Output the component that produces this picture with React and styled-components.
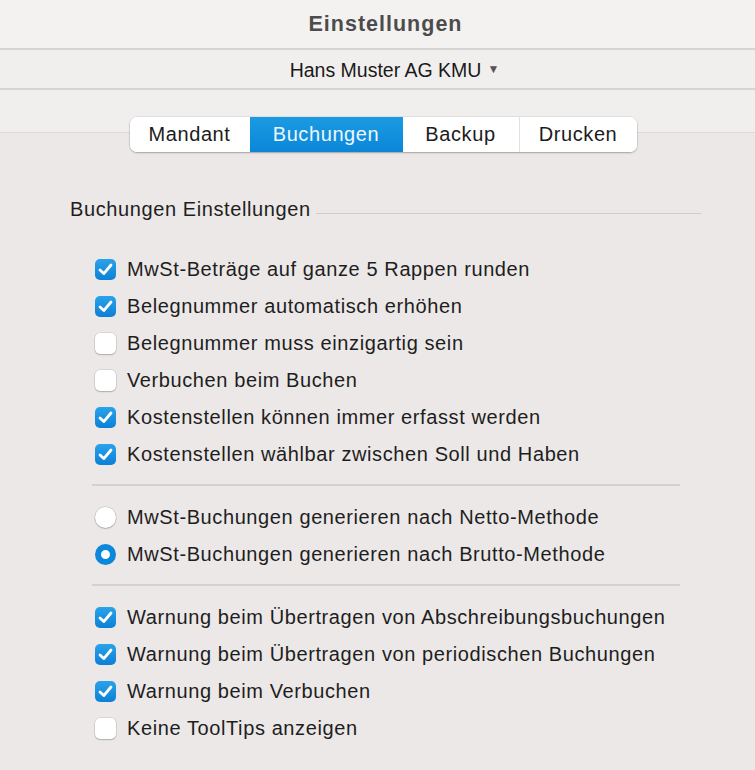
import React from 'react'
import styled, { createGlobalStyle } from 'styled-components'

const GlobalStyle = createGlobalStyle`
  html, body {
    margin: 0;
    padding: 0;
    background: #ebe8e7;
  }
  body {
    font-family: "Liberation Sans", Arial, Helvetica, sans-serif;
    color: #1e1e1e;
  }
`

const Window = styled.div`
  width: 755px;
  height: 770px;
  overflow: hidden;
  background: #ebe8e7;
`

const TitleBar = styled.div`
  height: 48px;
  display: flex;
  align-items: center;
  justify-content: center;
  padding-left: 16px;
  background: #f4f2f1;
  border-bottom: 2px solid #d6d4d3;
  font-size: 21.5px;
  font-weight: bold;
  letter-spacing: 1px;
  color: #4c4c4c;
`

const CompanyBar = styled.div`
  display: flex;
  align-items: center;
  justify-content: center;
  padding-left: 34px;
  padding-top: 3px;
  box-sizing: border-box;
  height: 40px;
  background: #f1efee;
  border-bottom: 2px solid #d6d4d3;
  font-size: 19.5px;
  color: #1a1a1a;
  gap: 6px;

  span.arrow {
    font-size: 12px;
    color: #555;
    margin-top: -4px;
  }
`

const TabArea = styled.div`
  display: flex;
  justify-content: center;
  padding-top: 27px;
  padding-left: 11px;
  background: linear-gradient(
    to bottom,
    #f1efee 0,
    #f1efee 42px,
    #dcdad9 42px,
    #dcdad9 43px,
    #ebe8e7 43px
  );
`

const Segmented = styled.div`
  display: flex;
  height: 35px;
  background: #fff;
  border-radius: 7px;
  box-shadow: 0 0 0 0.5px rgba(0, 0, 0, 0.12), 0 1px 2px rgba(0, 0, 0, 0.25);
  overflow: hidden;
`

const Tab = styled.div`
  width: ${p => p.$w}px;
  display: flex;
  align-items: center;
  justify-content: center;
  font-size: 20px;
  letter-spacing: 0.6px;
  color: ${p => (p.$active ? '#eef7fd' : '#1c1c1c')};
  background: ${p => (p.$active ? 'linear-gradient(to bottom, #1b9be2, #0a86d8)' : '#fff')};
  border-left: ${p => (p.$divider ? '1px solid #e2e2e2' : 'none')};
`

const Group = styled.div`
  padding: 46px 54px 0 70px;
`

const GroupTitle = styled.div`
  display: flex;
  align-items: center;
  font-size: 20px;
  letter-spacing: 0.6px;
  color: #1e1e1e;

  &::after {
    content: '';
    flex: 1;
    height: 1px;
    background: #cfcdcc;
    margin-left: 5px;
    margin-top: 7px;
  }
`

const Options = styled.div`
  padding: 30px 21px 0 25px;
`

const Row = styled.label`
  height: 37px;
  display: flex;
  align-items: center;
  gap: 11px;
  font-size: 20px;
  letter-spacing: 0.6px;
  color: #1e1e1e;
`

const Box = styled.span`
  width: 21px;
  height: 21px;
  box-sizing: border-box;
  border-radius: 5px;
  display: flex;
  align-items: center;
  justify-content: center;
  background: ${p => (p.$on ? 'linear-gradient(to bottom, #2aa3ea, #0c80d6)' : '#fff')};
  box-shadow: ${p => (p.$on ? 'none' : '0 0 0 0.5px rgba(0,0,0,0.15), 0 1px 1.5px rgba(0,0,0,0.2)')};
  flex-shrink: 0;
`

const Radio = styled.span`
  width: 21px;
  height: 21px;
  box-sizing: border-box;
  border-radius: 50%;
  flex-shrink: 0;
  background: #fff;
  border: ${p => (p.$on ? '6.5px solid #0c87dc' : 'none')};
  box-shadow: ${p => (p.$on ? 'none' : '0 0 0 0.5px rgba(0,0,0,0.15), 0 1px 1.5px rgba(0,0,0,0.2)')};
`

const Separator = styled.div`
  height: 2px;
  background: #d3d1d0;
  margin: 11px 0 13px -3px;
`

const Check = () => (
  <svg width="15" height="13" viewBox="0 0 15 13">
    <path d="M2 7 L5.8 10.6 L13 2" fill="none" stroke="#fff" strokeWidth="2.8" strokeLinecap="round" strokeLinejoin="round" />
  </svg>
)

const CheckRow = ({ on, children }) => (
  <Row>
    <Box $on={on}>{on && <Check />}</Box>
    {children}
  </Row>
)

const RadioRow = ({ on, children }) => (
  <Row>
    <Radio $on={on} />
    {children}
  </Row>
)

const tabs = [
  { label: 'Mandant', w: 120 },
  { label: 'Buchungen', w: 153, active: true },
  { label: 'Backup', w: 116 },
  { label: 'Drucken', w: 117 },
]

function App() {
  return (
    <Window>
      <GlobalStyle />
      <TitleBar>Einstellungen</TitleBar>
      <CompanyBar>
        Hans Muster AG KMU <span className="arrow">▼</span>
      </CompanyBar>
      <TabArea>
        <Segmented>
          {tabs.map((t, i) => (
            <Tab key={t.label} $w={t.w} $active={t.active} $divider={i === 3}>
              {t.label}
            </Tab>
          ))}
        </Segmented>
      </TabArea>
      <Group>
        <GroupTitle>Buchungen Einstellungen</GroupTitle>
        <Options>
          <CheckRow on>MwSt-Beträge auf ganze 5 Rappen runden</CheckRow>
          <CheckRow on>Belegnummer automatisch erhöhen</CheckRow>
          <CheckRow>Belegnummer muss einzigartig sein</CheckRow>
          <CheckRow>Verbuchen beim Buchen</CheckRow>
          <CheckRow on>Kostenstellen können immer erfasst werden</CheckRow>
          <CheckRow on>Kostenstellen wählbar zwischen Soll und Haben</CheckRow>
          <Separator />
          <RadioRow>MwSt-Buchungen generieren nach Netto-Methode</RadioRow>
          <RadioRow on>MwSt-Buchungen generieren nach Brutto-Methode</RadioRow>
          <Separator />
          <CheckRow on>Warnung beim Übertragen von Abschreibungsbuchungen</CheckRow>
          <CheckRow on>Warnung beim Übertragen von periodischen Buchungen</CheckRow>
          <CheckRow on>Warnung beim Verbuchen</CheckRow>
          <CheckRow>Keine ToolTips anzeigen</CheckRow>
        </Options>
      </Group>
    </Window>
  )
}

export default App
